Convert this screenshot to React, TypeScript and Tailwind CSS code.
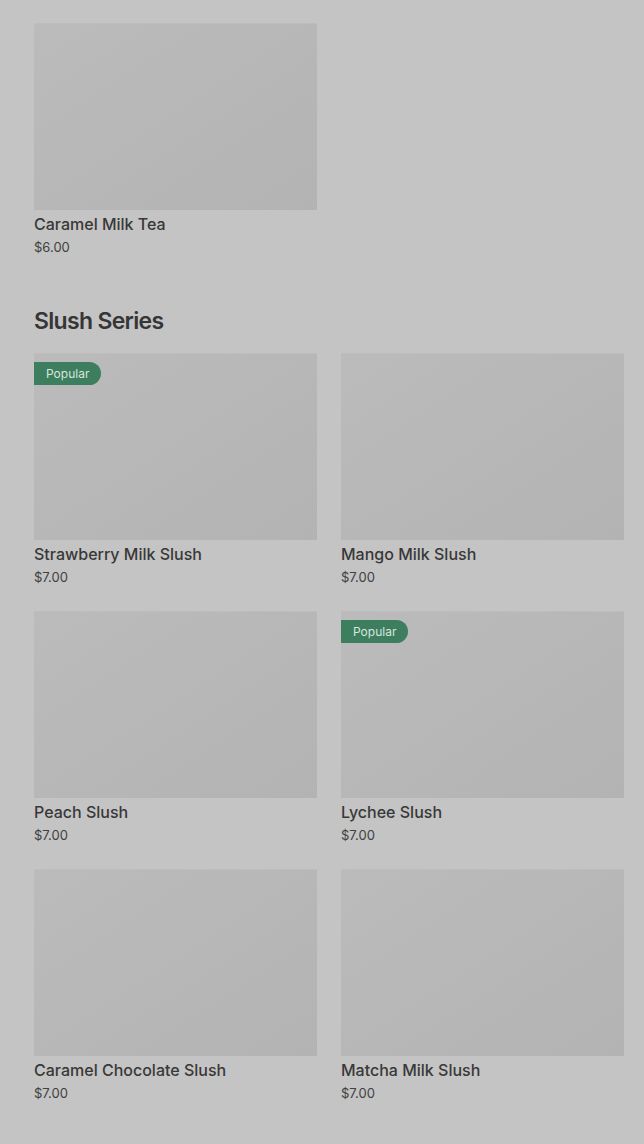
import React from 'react';

type Drink = { name: string; price: string; popular?: boolean };

const slushes: Drink[] = [
  { name: 'Strawberry Milk Slush', price: '$7.00', popular: true },
  { name: 'Mango Milk Slush', price: '$7.00' },
  { name: 'Peach Slush', price: '$7.00' },
  { name: 'Lychee Slush', price: '$7.00', popular: true },
  { name: 'Caramel Chocolate Slush', price: '$7.00' },
  { name: 'Matcha Milk Slush', price: '$7.00' },
];

const DrinkCard: React.FC<{ drink: Drink }> = ({ drink }) => (
  <div className="flex flex-col">
    <div className="relative h-[187px] w-full bg-gradient-to-br from-[#bbbbbb] to-[#b3b3b3] border-t border-[#bdbdbd]">
      {drink.popular && (
        <span className="absolute left-0 top-2 h-[23px] pl-3 pr-3 flex items-center rounded-r-full bg-[#3c7e5d] text-[12px] text-[#d8e6de]">
          Popular
        </span>
      )}
    </div>
    <h3 className="mt-0.5 text-[16px] leading-6 font-medium text-[#383838]">{drink.name}</h3>
    <p className="mt-px text-[13px] leading-5 text-[#404040]">{drink.price}</p>
  </div>
);

const App: React.FC = () => {
  return (
    <div className="min-h-[1144px] bg-[#c4c4c4] pl-[34px] pr-[20px] pt-[23px] font-['Inter','Liberation_Sans',sans-serif]">
      <div className="grid grid-cols-2 gap-x-6">
        <DrinkCard drink={{ name: 'Caramel Milk Tea', price: '$6.00' }} />
      </div>

      <h2 className="mt-[48px] mb-[16px] text-[23px] leading-8 font-semibold tracking-[-0.03em] text-[#363636]">
        Slush Series
      </h2>

      <div className="grid grid-cols-2 gap-x-6 gap-y-6">
        {slushes.map((d) => (
          <DrinkCard key={d.name} drink={d} />
        ))}
      </div>
    </div>
  );
};

export default App;
